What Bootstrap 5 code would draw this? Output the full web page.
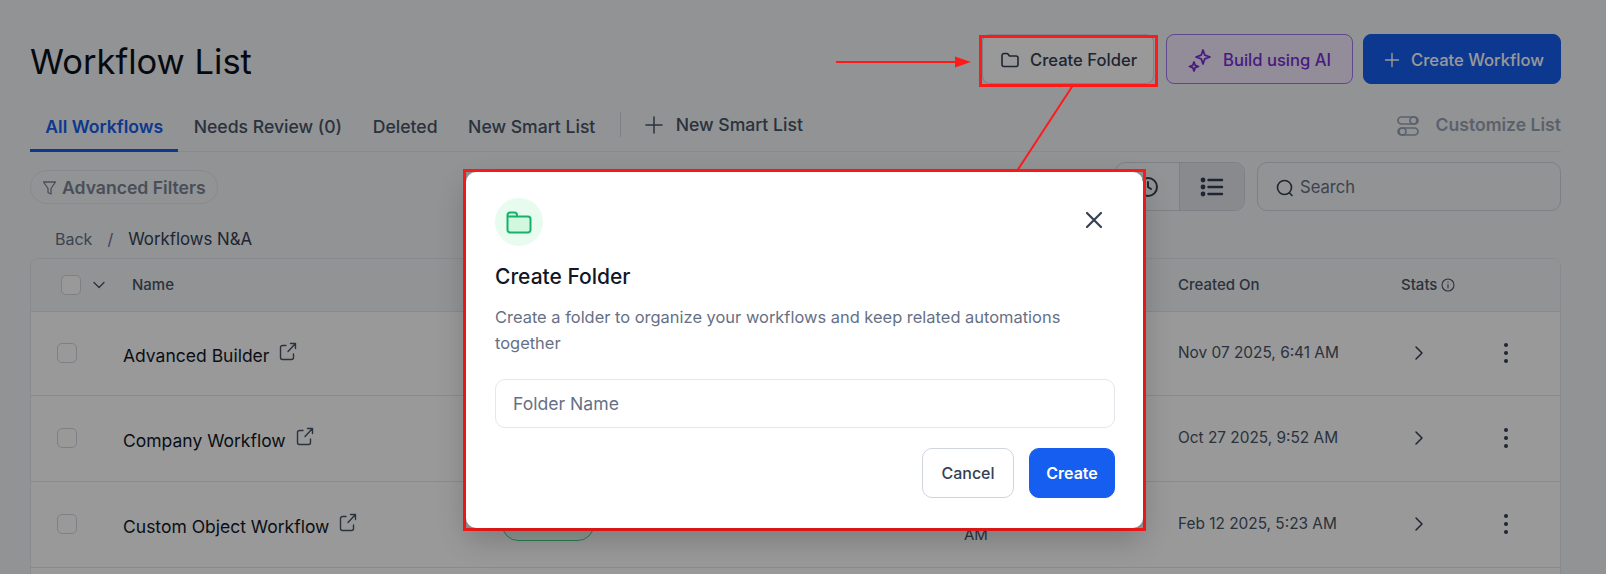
<!DOCTYPE html>
<html lang="en">
<head>
    <meta charset="UTF-8">
    <meta name="viewport" content="width=device-width, initial-scale=1.0">
    <title>Workflow List</title>
    <link href="https://cdn.jsdelivr.net/npm/bootstrap@5.3.2/dist/css/bootstrap.min.css" rel="stylesheet">
    <style>
        html, body { height: 574px; overflow: hidden; }
        body { font-family: Inter, "Liberation Sans", sans-serif; background: #f3f5f7; color: #101828; }
        .page-wrap { height: 574px; overflow: hidden; padding: 34px 45px 0 30px; }
        .page-title { font-size: 34.5px; font-weight: 400; line-height: 44px; margin: 6px 0 0; color: #0b0f18; }
        .head-btn { height: 50px; font-size: 16.6px; font-weight: 500; border-radius: 8px; display: flex; align-items: center; gap: 12px; padding: 2px 0 0; white-space: nowrap; }
        .btn-folder { width: 172px; margin-right: 12px; color: #344054; border: 1px solid #d0d5dd; background: #fff; padding-left: 17px; gap: 10px; }
        .btn-ai { width: 187px; margin-right: 10px; color: #7a2ed6; border: 1px solid #9e77ed; background: #f4ebff; padding-left: 20px; gap: 10px; }
        .btn-new { width: 198px; color: #fff; background: #155eef; border: 1px solid #155eef; padding-left: 20px; gap: 11px; }
        .tab-row { height: 68px; border-bottom: 1px solid #e4e7ec; }
        .tab-item { height: 68px; padding: 33px 15.3px 0; font-size: 17.6px; font-weight: 500; color: #475467; white-space: nowrap; line-height: 20px; }
        .tab-item.is-on { color: #155eef; font-weight: 600; border-bottom: 3px solid #155eef; }
        .tab-sep { width: 1px; height: 25px; background: #d0d5dd; margin: 28px 24px 0 9px; }
        .tab-add { color: #475467; font-size: 17.6px; font-weight: 500; gap: 13px; padding-top: 31px; line-height: 20px; }
        .custom-list { color: #98a2b3; font-size: 17.6px; font-weight: 600; gap: 16px; padding-top: 31px; line-height: 20px; }
        .tool-row { margin-top: 10px; height: 49px; }
        .filter-pill { height: 34px; width: 188px; border: 1px solid #e4e7ec; border-radius: 17px; color: #7a8494; font-size: 17.6px; font-weight: 600; gap: 5px; padding: 3px 0 0 11px; white-space: nowrap; }
        .view-group { width: 130px; height: 49px; border: 1px solid #d0d5dd; border-radius: 10px; overflow: hidden; margin-right: 12px; }
        .view-group > div { height: 100%; }
        .view-left { width: 64px; border-right: 1px solid #d0d5dd; }
        .view-right { flex: 1; background: #e4e7ec; }
        .search-box { width: 304px; height: 49px; border: 1px solid #d0d5dd; border-radius: 10px; color: #667085; font-size: 16.6px; gap: 6px; padding: 2px 0 0 18px; }
        .crumbs { height: 47px; padding: 11px 0 0 25px; font-size: 16.8px; color: #344054; gap: 15px; }
        .crumbs .back-link { color: #667085; font-size: 16px; margin-top: -2px; }
        .table-box { background: #fff; border: 1px solid #e4e7ec; border-radius: 8px; overflow: hidden; }
        .wf-table { --bs-table-bg: #fff; table-layout: fixed; width: 1529px; margin: 0; }
        .wf-table th { height: 52px; background: #f3f5f7; padding: 0; font-size: 15px; font-weight: 500; color: #475467; border-bottom: 1px solid #e4e7ec; vertical-align: middle; }
        .wf-table td { height: 86px; padding: 0; border-bottom: 1px solid #e4e7ec; vertical-align: middle; }
        .wf-table tbody tr:first-child td { height: 84px; }
        .box-check { display: block; width: 20px; height: 20px; border: 1px solid #d0d5dd; border-radius: 5px; background: #fff; }
        .head-check { margin-left: 30px; }
        .head-arrow { margin-left: 4px; }
        .row-check { margin-left: 26px; }
        .head-name { padding-left: 9px !important; }
        .wf-name { font-size: 17.5px; color: #101828; gap: 10px; padding-top: 6px; white-space: nowrap; }
        .wf-name svg { margin-top: -9px; }
        .state-pill { display: block; width: 92px; height: 33px; border: 1px solid #47cd89; border-radius: 16px; background: #ecfdf3; }
        .date-wrap { font-size: 15px; line-height: 21px; color: #475467; padding-top: 21px; }
        .date-line { font-size: 15.4px; color: #475467; white-space: nowrap; }
        .stat-arrow { margin-left: 11px; display: block; }
        .dots-icon { margin-left: 4px; display: block; }
        .dim-layer { position: absolute; inset: 0; background: rgba(0, 0, 0, .4); }
        .mark-layer { position: absolute; left: 0; top: 0; }
        .modal-frame { position: absolute; left: 463px; top: 169px; width: 683px; height: 362px; border: 3px solid #ff1a1a; }
        .folder-modal { height: 100%; border: 0; border-radius: 10px; background: #fff; padding: 26px 28px 0 29px; box-shadow: 0 12px 30px rgba(0, 0, 0, .2); }
        .icon-round { width: 48px; height: 48px; border-radius: 50%; background: #e7fbef; }
        .close-x { margin: 12px 11px 0 0; padding: 0; border: 0; background: none; line-height: 0; }
        .modal-head { font-size: 21px; font-weight: 500; line-height: 28px; color: #101828; margin: 17px 0 14px; }
        .modal-text { font-size: 16.45px; line-height: 25.5px; color: #667085; margin: 0 0 23px; }
        .folder-input { height: 49px; border: 1px solid #e4e7ec; border-radius: 10px; padding: 0 17px; font-size: 17.6px; color: #101828; }
        .folder-input::placeholder { color: #667085; opacity: 1; }
        .modal-foot { gap: 15px; margin-top: 20px; }
        .btn-cancel { width: 92px; height: 50px; border: 1px solid #d0d5dd; border-radius: 10px; background: #fff; color: #344054; font-size: 16px; font-weight: 500; }
        .btn-make { width: 86px; height: 50px; border: 1px solid #155eef; border-radius: 10px; background: #155eef; color: #fff; font-size: 16px; font-weight: 600; }
    </style>
</head>
<body>
<div class="page-wrap">
    <div class="d-flex justify-content-between">
        <h1 class="page-title">Workflow List</h1>
        <div class="d-flex">
            <button class="btn head-btn btn-folder">
                <svg width="20" height="20" viewBox="0 0 20 20" fill="none" stroke="currentColor" stroke-width="1.6" stroke-linejoin="round"><path d="M2 5.500a2 2 0 0 1 2-2h2.600a2 2 0 0 1 1.600.800L9.500 6H16a2 2 0 0 1 2 2v6.500a2 2 0 0 1-2 2H4a2 2 0 0 1-2-2z"/></svg>
                Create Folder
            </button>
            <button class="btn head-btn btn-ai">
                <svg width="26" height="26" viewBox="0 0 26 26" fill="none" stroke="currentColor" stroke-width="1.8" stroke-linejoin="round"><path d="M16 3l1.800 5.200L23 10l-5.200 1.800L16 17l-1.800-5.200L9 10l5.200-1.800z"/><path d="M7 15l1.200 3.300L11.500 19.500l-3.300 1.200L7 24l-1.200-3.300L2.500 19.500l3.300-1.200z"/></svg>
                Build using AI
            </button>
            <button class="btn head-btn btn-new">
                <svg width="16" height="16" viewBox="0 0 16 16" fill="none" stroke="currentColor" stroke-width="1.4" stroke-linecap="round"><path d="M8 1.500v13M1.500 8h13"/></svg>
                Create Workflow
            </button>
        </div>
    </div>

    <div class="tab-row d-flex justify-content-between">
        <div class="d-flex">
            <div class="tab-item is-on">All Workflows</div>
            <div class="tab-item">Needs Review (0)</div>
            <div class="tab-item">Deleted</div>
            <div class="tab-item">New Smart List</div>
            <div class="tab-sep"></div>
            <div class="tab-add d-flex">
                <svg width="18" height="20" viewBox="0 0 18 20" fill="none" stroke="currentColor" stroke-width="1.5" stroke-linecap="round"><path d="M9 2v16M1 10h16"/></svg>
                New Smart List
            </div>
        </div>
        <div class="custom-list d-flex">
            <svg width="22" height="22" viewBox="0 0 22 22" fill="none" stroke="currentColor" stroke-width="1.7"><rect x="1" y="2" width="20" height="7" rx="3.500"/><circle cx="16.500" cy="5.500" r="3.500"/><rect x="1" y="13" width="20" height="7" rx="3.500"/><circle cx="5.500" cy="16.500" r="3.500"/></svg>
            Customize List
        </div>
    </div>

    <div class="tool-row d-flex justify-content-between align-items-center">
        <div class="filter-pill d-flex align-items-center">
            <svg width="15" height="16" viewBox="0 0 15 16" fill="none" stroke="currentColor" stroke-width="1.3" stroke-linejoin="round"><path d="M1.500 2h12L9 8.500V14l-3-1.500v-4z"/></svg>
            Advanced Filters
        </div>
        <div class="d-flex">
            <div class="view-group d-flex">
                <div class="view-left d-flex align-items-center justify-content-center">
                    <svg width="24" height="24" viewBox="0 0 24 24" fill="none" stroke="#344054" stroke-width="2" stroke-linecap="round"><circle cx="12" cy="12" r="9"/><path d="M12 7v5l3 2"/></svg>
                </div>
                <div class="view-right d-flex align-items-center justify-content-center">
                    <svg width="24" height="20" viewBox="0 0 24 20" fill="#344054" stroke="#344054" stroke-width="2.400" stroke-linecap="round"><path d="M8.500 3H22M8.500 10H22M8.500 17H22"/><g stroke="none"><circle cx="3" cy="3" r="2.400"/><circle cx="3" cy="10" r="2.400"/><circle cx="3" cy="17" r="2.400"/></g></svg>
                </div>
            </div>
            <div class="search-box d-flex align-items-center">
                <svg width="18" height="20" viewBox="0 0 18 20" fill="none" stroke="#344054" stroke-width="1.6" stroke-linecap="round"><circle cx="8.500" cy="9.500" r="7"/><path d="M13.500 15l2.500 2.500"/></svg>
                Search
            </div>
        </div>
    </div>

    <div class="crumbs d-flex align-items-center">
        <span class="back-link">Back</span><span class="back-link">/</span><span>Workflows N&amp;A</span>
    </div>

    <div class="table-box">
        <table class="table wf-table">
            <colgroup>
                <col style="width: 92px"><col style="width: 379px"><col style="width: 462px"><col style="width: 214px"><col style="width: 223px"><col style="width: 89px"><col>
            </colgroup>
            <thead>
                <tr>
                    <th>
                        <div class="d-flex align-items-center gap-2">
                            <span class="box-check head-check"></span>
                            <svg class="head-arrow" width="12" height="8" viewBox="0 0 12 8" fill="none" stroke="#475467" stroke-width="1.3" stroke-linecap="round" stroke-linejoin="round"><path d="M1 1.500l5 5 5-5"/></svg>
                        </div>
                    </th>
                    <th class="head-name">Name</th>
                    <th></th>
                    <th></th>
                    <th>Created On</th>
                    <th>
                        <div class="d-flex align-items-center gap-1">Stats
                            <svg width="14" height="14" viewBox="0 0 14 14" fill="none" stroke="#475467" stroke-width="1.1" stroke-linecap="round"><circle cx="7" cy="7" r="6"/><path d="M7 6.500v3.500M7 4v.2"/></svg>
                        </div>
                    </th>
                    <th></th>
                </tr>
            </thead>
            <tbody id="wf-rows"></tbody>
        </table>
    </div>
</div>

<div class="dim-layer"></div>

<svg class="mark-layer" width="1606" height="574" viewBox="0 0 1606 574" fill="none">
    <rect x="980.500" y="36.500" width="176" height="49" stroke="#ff1a1a" stroke-width="3"/>
    <path d="M836 62H958" stroke="#ff1a1a" stroke-width="2"/>
    <path d="M955 56.500L971 62L955 67.500z" fill="#ff1a1a"/>
    <path d="M1072.500 86L1017 171" stroke="#ff1a1a" stroke-width="2"/>
</svg>

<div class="modal-frame">
    <div class="folder-modal">
        <div class="d-flex justify-content-between align-items-start">
            <div class="icon-round d-flex align-items-center justify-content-center">
                <svg width="26" height="23" viewBox="0 0 26 23" fill="none" stroke="#17b26a" stroke-width="2" stroke-linejoin="round"><path d="M1.500 4a2.500 2.500 0 0 1 2.500-2.500h4.500a2.500 2.500 0 0 1 2.500 2.500v1.500h11a2.500 2.500 0 0 1 2.500 2.500V19a2.500 2.500 0 0 1-2.500 2.500H4A2.500 2.500 0 0 1 1.500 19z" fill="#d1f7de"/><path d="M1.500 5.500H11"/></svg>
            </div>
            <button class="close-x" aria-label="Close">
                <svg width="20" height="20" viewBox="0 0 20 20" fill="none" stroke="#344054" stroke-width="2.200" stroke-linecap="round"><path d="M3 3l14 14M17 3L3 17"/></svg>
            </button>
        </div>
        <h5 class="modal-head">Create Folder</h5>
        <p class="modal-text">Create a folder to organize your workflows and keep related automations together</p>
        <input class="form-control folder-input" type="text" placeholder="Folder Name">
        <div class="modal-foot d-flex justify-content-end">
            <button class="btn btn-cancel">Cancel</button>
            <button class="btn btn-make">Create</button>
        </div>
    </div>
</div>

<script>
    // only what shows around the dialog is filled in; the rest of the row sits behind it
    const rows = [
        { name: 'Advanced Builder', created: 'Nov 07 2025, 6:41 AM' },
        { name: 'Company Workflow', created: 'Oct 27 2025, 9:52 AM' },
        { name: 'Custom Object Workflow', created: 'Feb 12 2025, 5:23 AM', pill: true, tail: 'AM' },
        { name: '', created: '' }
    ];

    const extIcon = '<svg width="18" height="19" viewBox="0 0 18 19" fill="none" stroke="#475467" stroke-width="1.4" stroke-linecap="round" stroke-linejoin="round"><path d="M7 3.500H3.500a2 2 0 0 0-2 2v10a2 2 0 0 0 2 2h9a2 2 0 0 0 2-2V12"/><path d="M9 9.500L16.500 1.500M11.500 1.500h5v5"/></svg>';
    const arrowIcon = '<svg class="stat-arrow" width="14" height="16" viewBox="0 0 14 16" fill="none" stroke="#344054" stroke-width="1.5" stroke-linecap="round" stroke-linejoin="round"><path d="M4 2l6 6-6 6"/></svg>';
    const dotsIcon = '<svg class="dots-icon" width="24" height="22" viewBox="0 0 24 22" fill="#344054"><circle cx="12" cy="3" r="2"/><circle cx="12" cy="11" r="2"/><circle cx="12" cy="19" r="2"/></svg>';

    document.getElementById('wf-rows').innerHTML = rows.map(r => r.name ? `
        <tr>
            <td><span class="box-check row-check"></span></td>
            <td><div class="wf-name d-flex align-items-center">${r.name} ${extIcon}</div></td>
            <td>${r.pill ? '<span class="state-pill"></span>' : ''}</td>
            <td>${r.tail ? `<div class="date-wrap">${r.tail}</div>` : ''}</td>
            <td><div class="date-line">${r.created}</div></td>
            <td>${arrowIcon}</td>
            <td>${dotsIcon}</td>
        </tr>` : '<tr><td colspan="7"></td></tr>').join('');
</script>
<script src="https://cdn.jsdelivr.net/npm/bootstrap@5.3.2/dist/js/bootstrap.bundle.min.js"></script>
</body>
</html>
